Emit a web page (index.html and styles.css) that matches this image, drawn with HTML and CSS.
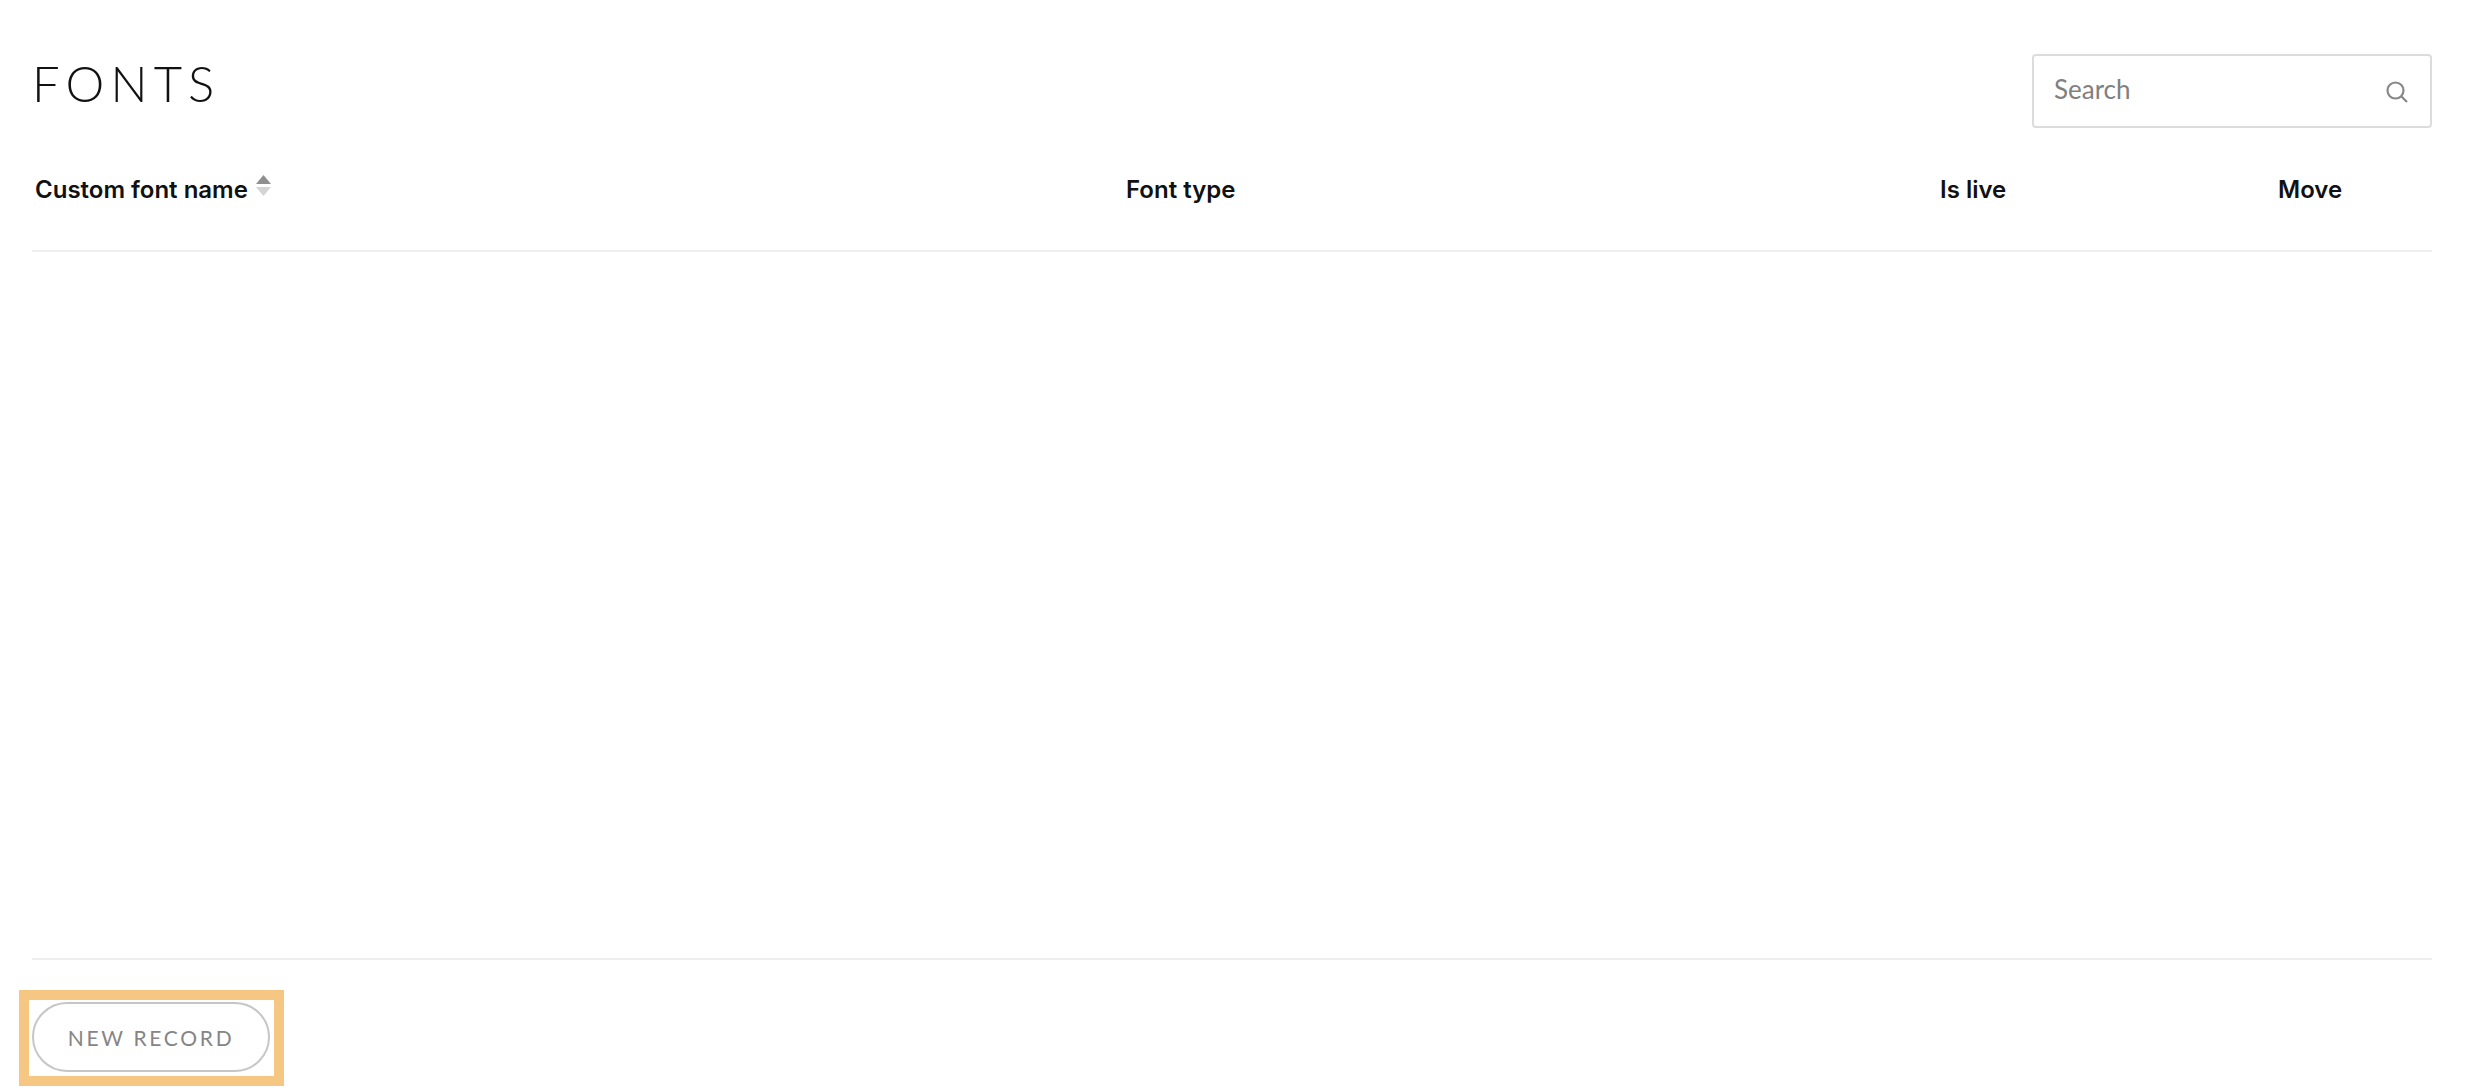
FILE: index.html
```html
<!DOCTYPE html>
<html lang="en">
<head>
    <meta charset="UTF-8">
    <title>Fonts</title>
    <link rel="stylesheet" href="styles.css">
</head>
<body>
    <header class="top-bar">
        <h1>FONTS</h1>
        <div class="search-box">
            <span class="search-text">Search</span>
            <svg class="search-icon" width="22" height="22" viewBox="0 0 22 22" fill="none" stroke="#888" stroke-width="2.2">
                <circle cx="9.5" cy="9.5" r="8"/>
                <path d="M15.2 15.2L21 21"/>
            </svg>
        </div>
    </header>

    <div class="table-head">
        <div class="col col-name">
            <span>Custom font name</span>
            <svg class="sort-icon" width="15" height="21" viewBox="0 0 15 21">
                <path d="M7.5 0L15 9H0Z" fill="#8f8f8f"/>
                <path d="M0 12H15L7.5 21Z" fill="#d4d4d4"/>
            </svg>
        </div>
        <div class="col">Font type</div>
        <div class="col">Is live</div>
        <div class="col">Move</div>
    </div>

    <div class="table-body"></div>

    <footer class="bottom-bar">
        <div class="highlight">
            <button class="new-record">NEW RECORD</button>
        </div>
    </footer>
</body>
</html>
```

FILE: styles.css
```css
* {
    margin: 0;
    padding: 0;
    box-sizing: border-box;
}
body {
    display: flex;
    flex-direction: column;
    height: 100vh;
    padding: 54px 60px 0 32px;
    background-color: #fff;
    font-family: "Lato", sans-serif;
    color: #111;
}
.top-bar {
    display: flex;
    justify-content: space-between;
    align-items: flex-start;
    height: 74px;
}
h1 {
    font-size: 49px;
    font-weight: 300;
    letter-spacing: 6.2px;
    line-height: 58px;
}
.search-box {
    display: flex;
    align-items: center;
    justify-content: space-between;
    width: 400px;
    height: 74px;
    padding: 0 22px 0 20px;
    border: 2px solid #dcdcdc;
    border-radius: 4px;
}
.search-text {
    font-size: 26px;
    font-weight: 400;
    color: #808080;
    margin-bottom: 4px;
}
.search-icon {
    margin-top: 2px;
}
.table-head {
    display: grid;
    grid-template-columns: 1091px 814px 338px 1fr;
    align-items: center;
    height: 124px;
    padding: 0 0 0 3px;
    border-bottom: 2px solid #efefef;
}
.col {
    font-family: "Inter", sans-serif;
    font-size: 24px;
    font-weight: 600;
}
.col-name {
    display: flex;
    align-items: center;
    gap: 8px;
}
.sort-icon {
    margin-top: -8px;
}
.table-body {
    height: 708px;
    border-bottom: 2px solid #efefef;
}
.bottom-bar {
    padding-top: 30px;
}
.highlight {
    width: 265px;
    height: 96px;
    margin-left: -13px;
    border: 10px solid #f6c782;
    padding: 2px 3px;
}
.new-record {
    display: block;
    width: 238px;
    height: 70px;
    background-color: #fff;
    border: 2px solid #c6c6c6;
    border-radius: 35px;
    font-family: "Lato", sans-serif;
    font-size: 21px;
    font-weight: 400;
    letter-spacing: 2.7px;
    color: #858585;
}
```
